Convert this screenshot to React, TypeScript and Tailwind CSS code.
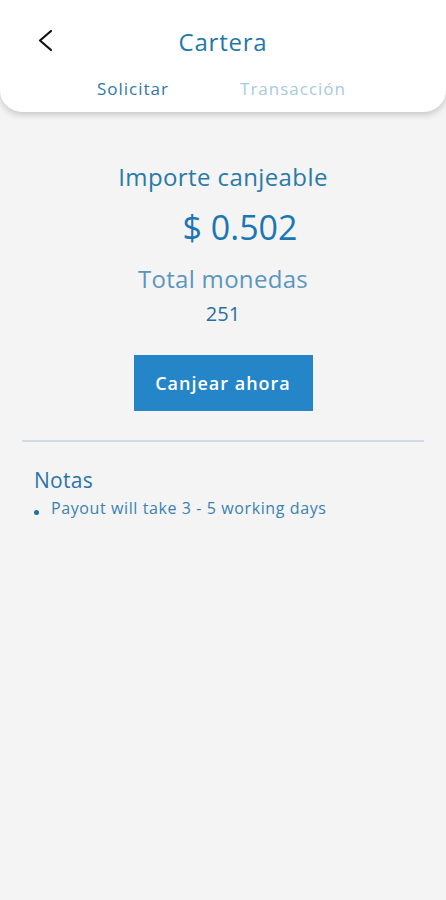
const font = { fontFamily: "'Open Sans', 'Noto Sans', sans-serif" };

const BackArrow = () => (
  <svg width="20" height="26" viewBox="0 0 20 26" fill="none">
    <polyline points="15,3 4,12.5 15,22" stroke="#111" strokeWidth="2.2" strokeLinecap="round" strokeLinejoin="round" />
  </svg>
);

const App = () => {
  return (
    <div className="min-h-[900px] w-full bg-[#f4f4f4]" style={font}>
      <div className="relative h-[112px] rounded-b-[22px] bg-white shadow-[0_3px_6px_rgba(0,0,0,0.18)]">
        <button className="absolute left-[36px] top-[28px]">
          <BackArrow />
        </button>
        <div className="flex h-[72px] items-center justify-center pt-[12px]">
          <h1 className="text-[24px] tracking-[0.8px] text-[#1f78aa]">Cartera</h1>
        </div>
        <div className="ml-[53px] mt-[4px] grid w-[320px] grid-cols-2 text-center text-[17px] tracking-[1px]">
          <span className="text-[#2f78a6]">Solicitar</span>
          <span className="text-[#a9c9dc]">Transacción</span>
        </div>
      </div>

      <div className="flex flex-col items-center pt-[48px]">
        <p className="text-[24px] leading-[34px] tracking-[0.4px] text-[#2a7aa8]">Importe canjeable</p>
        <p className="mt-[10px] pl-[34px] text-[34px] leading-[46px] text-[#1c76b4]">$ 0.502</p>
        <p className="mt-[13px] text-[24px] leading-[32px] tracking-[0.3px] text-[#5b96be]">Total monedas</p>
        <p className="mt-[3px] text-[20px] leading-[32px] text-[#2b6f9f]">251</p>
        <button className="mt-[25px] h-[56px] w-[179px] bg-[#2585c9] text-[18px] font-semibold tracking-[1px] text-white">
          Canjear ahora
        </button>
      </div>

      <div className="mx-[22px] mt-[29px] h-[2px] bg-[#cfdce9]" />

      <div className="px-[34px] pt-[23px]">
        <p className="text-[21px] leading-[30px] tracking-[0.3px] text-[#2a75a5]">Notas</p>
        <div className="mt-[2px] flex items-center">
          <span className="mr-[12px] mt-[8px] h-[5px] w-[5px] rounded-full bg-[#1f6fa3]" />
          <span className="text-[16px] leading-[22px] tracking-[0.6px] text-[#3a82b0]">Payout will take 3 - 5 working days</span>
        </div>
      </div>
    </div>
  );
};

export default App;
